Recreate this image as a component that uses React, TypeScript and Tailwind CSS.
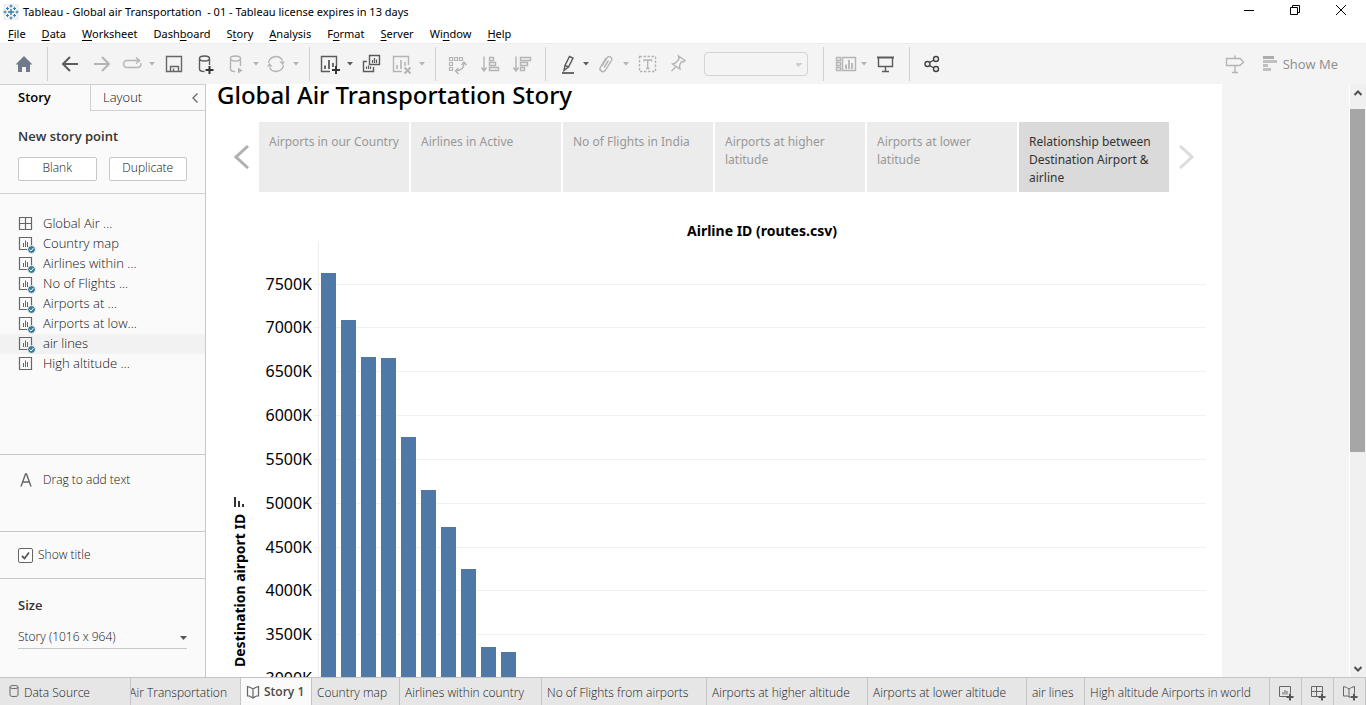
import React from "react";

type IconProps = { children: React.ReactNode; tone?: string };

const dark = "text-[#5b5b5b]";
const dim = "text-[#b4b4b4]";

function Icon({ children, tone = dark }: IconProps) {
  return (
    <svg viewBox="0 0 24 24" className={`block size-6 shrink-0 ${tone}`} fill="none" stroke="currentColor" strokeWidth="1.4" aria-hidden="true">
      {children}
    </svg>
  );
}

function Tool({ label, width = "w-8", tone, children }: { label: string; width?: string; tone?: string; children: React.ReactNode }) {
  return (
    <button type="button" aria-label={label} className={`flex h-8 shrink-0 items-center justify-center ${width}`}>
      <Icon tone={tone}>{children}</Icon>
    </button>
  );
}

function Caret({ label, tone = dim }: { label: string; tone?: string }) {
  return (
    <button type="button" aria-label={label} className={`flex h-8 w-3 shrink-0 items-center justify-center ${tone}`}>
      <svg viewBox="0 0 6 4" className="h-1 w-1.5" fill="currentColor" aria-hidden="true">
        <path d="M0 0h6L3 3.5z" />
      </svg>
    </button>
  );
}

function Separator({ margin = "ml-[7px] mr-1.5" }: { margin?: string }) {
  return <div className={`h-[34px] w-px shrink-0 bg-[#d0d0d0] ${margin}`} />;
}

function Toolbar() {
  return (
    <div className="flex h-[41px] shrink-0 items-center border-t border-[#ededed] bg-[#f4f4f4]">
      <button type="button" aria-label="Start page" className="ml-2 flex h-8 w-8 shrink-0 items-center justify-center">
        <svg viewBox="0 0 24 24" className="size-6" aria-hidden="true">
          <path d="M12 4l8.5 8.5H18V20h-4v-5h-4v5H6v-7.500H3.500z" fill="#6f7b8a" />
        </svg>
      </button>
      <Separator />
      <Tool label="Undo"><path d="M20 12H5M12 5l-7 7 7 7" strokeWidth="2" /></Tool>
      <Tool label="Redo" tone={dim}><path d="M4 12h15M12 5l7 7-7 7" strokeWidth="2" /></Tool>
      <Tool label="Replay" width="w-7" tone={dim}>
        <path d="M20 8.500H7a3.500 3.500 0 0 0 0 7h11a3 3 0 0 0 2.500-4.500" />
        <path d="M16 5.500l3.500 3-3.500 3" />
      </Tool>
      <Caret label="Replay options" />
      <Tool label="Save" tone="text-[#666666]">
        <path d="M4.500 4.500h15v15h-15zM8.500 19v-4.500h8V19M11.500 19v-2.500" />
      </Tool>
      <Tool label="New data source">
        <path d="M5.500 6.500v10.500c0 1.500 2 2.500 5 2.500M5.500 6.500c0-1.500 2-2.500 5-2.500s5 1 5 2.500-2 2.500-5 2.500-5-1-5-2.500zM15.500 6.500V13" />
        <path d="M15.500 14v8M11.500 18h8" stroke="#333333" strokeWidth="2" />
      </Tool>
      <Tool label="Pause auto updates" width="w-7" tone={dim}>
        <path d="M6.500 6.500v10.500c0 1.500 2 2.500 4.500 2.500M6.500 6.500c0-1.500 2-2.500 5-2.500s5 1 5 2.500-2 2.500-5 2.500-5-1-5-2.500zM16.500 6.500V14" />
        <path d="M14 15.500v6l4.500-3z" fill="currentColor" stroke="none" />
      </Tool>
      <Caret label="Auto update options" />
      <Tool label="Run update" width="w-7" tone={dim}>
        <path d="M4.500 11a7.500 7.500 0 0 1 14-2.500M19.500 13a7.500 7.500 0 0 1-14 2.500" />
        <path d="M15.500 9.500H21L18.500 13zM8.500 14.500H3L5.500 11z" fill="currentColor" stroke="none" />
      </Tool>
      <Caret label="Run update options" />
      <Separator />
      <Tool label="New worksheet" width="w-7">
        <path d="M12 19.500H3.500v-15h15V14" />
        <path d="M7 13.500V17M11 8v9M15 11v4" strokeWidth="1.800" />
        <path d="M18 14v8M14 18h8" stroke="#333333" strokeWidth="2" />
      </Tool>
      <Caret label="New worksheet options" tone={dark} />
      <Tool label="Duplicate">
        <path d="M9.500 3.500h10v9h-10zM7 9.500H3.500v10h10V15" />
        <path d="M12.500 8v3M14.500 6v5M16.500 7.500V11M6.500 14.500V17M8.500 13.500V17M10.500 14.500V17" strokeWidth="1.200" />
      </Tool>
      <Tool label="Clear sheet" width="w-7" tone={dim}>
        <path d="M12 19.500H3.500v-15h15V13" />
        <path d="M7 13v4M11 8v9M15 10v4" strokeWidth="1.600" />
        <path d="M14.500 15.500l6 6M20.500 15.500l-6 6" strokeWidth="2" />
      </Tool>
      <Caret label="Clear options" />
      <Separator />
      <Tool label="Swap rows and columns" tone={dim}>
        <path d="M3.500 5.500h3v3h-3zM8.500 5.500h3v3h-3zM13.500 5.500h3v3h-3zM3.500 10.500h3v3h-3zM3.500 15.500h3v3h-3z" strokeWidth="1.200" />
        <path d="M18 11c0 5-2.500 7.500-8 8M15.500 13l2.500-3 2.500 3M12.500 16l-3 3 3 3" />
      </Tool>
      <Tool label="Sort ascending" tone={dim}>
        <path d="M6 4.500v14M3.500 15.500L6 19l2.500-3.500M11.500 5.500h4v3h-4zM11.500 10.500h6v3h-6zM11.500 15.500h9v3h-9z" />
      </Tool>
      <Tool label="Sort descending" tone={dim}>
        <path d="M6 4.500v14M3.500 15.500L6 19l2.500-3.500M10.500 5.500h10v3h-10zM10.500 10.500h7v3h-7zM10.500 15.500h4v3h-4z" />
      </Tool>
      <Separator margin="ml-[7px] mr-2.5" />
      <Tool label="Highlight" width="w-6">
        <path d="M13.500 4.500l3.500 1.500-4.500 9-3.500-1.500zM9 13.500l-1 5 4.500-3.500" />
        <path d="M6 21h12" strokeWidth="1.800" />
      </Tool>
      <Caret label="Highlight options" tone={dark} />
      <Tool label="Group members" width="w-7" tone={dim}>
        <path d="M8 14l5-8c2-3 6-.500 4.500 2.500l-6 9.500c-2.500 3.500-7 .500-5-3L12 6M10 15.500l4.500-7" />
      </Tool>
      <Caret label="Group options" />
      <Tool label="Show mark labels" tone={dim}>
        <path d="M3.500 4.500h16v15h-16z" strokeDasharray="2.500 1.500" />
        <path d="M8 9.500V8h7.500v1.500M11.700 8v8.500M10 16.500h3.500" />
      </Tool>
      <Tool label="Fix axes" width="w-7" tone={dim}>
        <path d="M12.500 4l6.500 4.500-1.500 1.500-2-.500-2 4 .500 3.500-7.500-5 3-1 3.500-4zM10 14.500L5.500 19" />
      </Tool>
      <select aria-label="Fit" disabled className="ml-3 h-6 w-[104px] shrink-0 appearance-none rounded-sm border border-[#d4d4d4] bg-[#f4f4f4] bg-[linear-gradient(to_bottom_right,#cfcfcf_50%,transparent_50%),linear-gradient(to_bottom_left,#cfcfcf_50%,transparent_50%)] bg-[length:4px_4px] bg-[position:94px_10px,90px_10px] bg-no-repeat" />
      <Separator margin="ml-[15px] mr-2.5" />
      <Tool label="Show or hide cards" width="w-6" tone={dim}>
        <path d="M2.500 5.500h4v3h-4zM2.500 10.500h4v3h-4zM2.500 15.500h4v3h-4zM8.500 5.500h13v13h-13z" />
        <path d="M12 12.500V17M15 8v9M18 11v6" strokeWidth="1.800" />
      </Tool>
      <Caret label="Card options" />
      <Tool label="Presentation mode">
        <path d="M3 5.500h17" strokeWidth="2" />
        <path d="M4.500 6v8.500h14V6M11.500 14.500v5M8 19.500h7" />
      </Tool>
      <Separator />
      <Tool label="Share" tone="text-[#444444]">
        <circle cx="7.500" cy="12" r="2.500" />
        <circle cx="16" cy="7" r="2.500" />
        <circle cx="16" cy="17" r="2.500" />
        <path d="M9.500 10.500L14 8M9.500 13.500L14 16" />
      </Tool>
      <div className="ml-auto flex items-center pr-7">
        <Tool label="Data guide" tone={dim}>
          <path d="M3.500 6.500h13.500l3.500 3.500-3.500 3.500H3.500zM12 3.500v3M12 13.500v7M9 20.500h6" />
        </Tool>
        <button type="button" className="ml-3 flex items-center gap-1.5 font-['Open_Sans',sans-serif] text-[13px] leading-4 text-[#8c8c8c]">
          <svg viewBox="0 0 14 16" className="h-4 w-3.5" fill="#c0c0c0" aria-hidden="true">
            <path d="M0 0h11v3H0z" fill="#acacac" />
            <path d="M0 4h14v3H0zM0 8h5v3H0zM0 12h8v3H0z" />
          </svg>
          Show Me
        </button>
      </div>
    </div>
  );
}

const menus: [string, string, string][] = [
  ["", "F", "ile"], ["", "D", "ata"], ["", "W", "orksheet"], ["Dash", "b", "oard"], ["S", "t", "ory"],
  ["", "A", "nalysis"], ["F", "o", "rmat"], ["", "S", "erver"], ["Wi", "n", "dow"], ["", "H", "elp"],
];

function TitleBar() {
  return (
    <header className="shrink-0 bg-white font-['Noto_Sans',sans-serif] text-[11px] text-black">
      <div className="flex h-6 items-center pl-[3px]">
        <svg viewBox="0 0 16 16" className="size-4 shrink-0 bg-[#f0f0f0]" stroke="#2f7fa8" fill="none" aria-hidden="true">
          <path d="M8 5v6M5 8h6" strokeWidth="1.400" />
          <path d="M8 .5v3M6.500 2h3M8 12.500v3M6.500 14h3M.5 8h3M2 6.500v3M12.500 8h3M14 6.500v3M4.500 3v3M3 4.500h3M11.500 3v3M10 4.500h3M4.500 10v3M3 11.500h3M11.500 10v3M10 11.500h3" />
        </svg>
        <h1 className="ml-1 whitespace-pre">Tableau - Global air Transportation  - 01 - Tableau license expires in 13 days</h1>
        <div className="ml-auto flex items-start pr-0.5 pb-1">
          <button type="button" aria-label="Minimize" className="flex h-5 w-[46px] items-center justify-center">
            <svg viewBox="0 0 10 10" className="size-2.5" stroke="black"><path d="M0 5.500h10" /></svg>
          </button>
          <button type="button" aria-label="Restore" className="flex h-5 w-[46px] items-center justify-center">
            <svg viewBox="0 0 10 10" className="size-2.5" stroke="black" fill="none"><path d="M.5 2.500h7v7h-7zM2.500 2.500v-2h7v7h-2" /></svg>
          </button>
          <button type="button" aria-label="Close" className="flex h-5 w-[46px] items-center justify-center">
            <svg viewBox="0 0 10 10" className="size-2.5" stroke="black"><path d="M0 0l10 10M10 0L0 10" /></svg>
          </button>
        </div>
      </div>
      <nav className="flex h-[19px] items-center gap-4 pt-0.5 pl-2">
        {menus.map(([a, k, b]) => (
          <button type="button" key={a + k + b}>{a}<span className="underline underline-offset-2">{k}</span>{b}</button>
        ))}
      </nav>
    </header>
  );
}

function SheetGlyph({ used }: { used: boolean }) {
  return (
    <svg viewBox="0 0 18 16" className="h-4 w-[18px] shrink-0 overflow-visible" fill="none" stroke="#666666" aria-hidden="true">
      <path d="M1.500 1.500h12v12h-12z" strokeWidth="1.200" />
      <path d="M5.500 7v4M7.500 4.500V11M9.500 6v5" />
      {used && (
        <>
          <circle cx="13.500" cy="13.500" r="4" fill="#3b7d99" stroke="#fafafa" />
          <path d="M11.500 13.500l1.500 1.500 2.500-3" stroke="white" />
        </>
      )}
    </svg>
  );
}

function GridGlyph() {
  return (
    <svg viewBox="0 0 18 16" className="h-4 w-[18px] shrink-0" fill="none" stroke="#666666" strokeWidth="1.200" aria-hidden="true">
      <path d="M1.500 1.500h12v12h-12zM7.500 1.500v12M1.500 7.500h12" />
    </svg>
  );
}

const sheets = [
  { name: "Global Air ...", kind: "dashboard" },
  { name: "Country map", kind: "used" },
  { name: "Airlines within ...", kind: "used" },
  { name: "No of Flights ...", kind: "used" },
  { name: "Airports at ...", kind: "used" },
  { name: "Airports at low...", kind: "used" },
  { name: "air lines", kind: "used", active: true },
  { name: "High altitude ...", kind: "sheet" },
];

function Sidebar() {
  return (
    <aside className="flex w-[206px] shrink-0 flex-col border-r border-[#cacaca] bg-[#fafafa] font-['Open_Sans',sans-serif] text-[13px] font-light text-[#111111]">
      <div className="flex h-[27px] shrink-0 border-t border-[#d0d0d0]">
        <button type="button" className="w-[90px] pl-[18px] text-left font-semibold text-black">Story</button>
        <div className="flex flex-1 items-center border-b border-l border-[#d0d0d0] pl-3 pr-[7px]">
          <button type="button">Layout</button>
          <button type="button" aria-label="Collapse pane" className="ml-auto">
            <svg viewBox="0 0 6 10" className="h-2.5 w-1.5" fill="none" stroke="#666666" strokeWidth="1.300"><path d="M5.500 .5L1 5l4.500 4.500" /></svg>
          </button>
        </div>
      </div>
      <section className="h-[83px] shrink-0 border-b border-[#d0d0d0] px-[18px] pt-[15px]">
        <h2 className="leading-5 font-semibold text-[#333333]">New story point</h2>
        <div className="mt-[11px] flex gap-3 text-xs">
          <button type="button" className="h-6 flex-1 rounded-xs border border-[#c8c8c8] bg-white pb-0.5">Blank</button>
          <button type="button" className="h-6 flex-1 rounded-xs border border-[#c8c8c8] bg-white pb-0.5">Duplicate</button>
        </div>
      </section>
      <ul className="flex-1 pt-5">
        {sheets.map((s) => (
          <li key={s.name} className={`flex h-5 items-center gap-[7px] pl-[18px] ${s.active ? "bg-[#f2f2f2]" : ""}`}>
            {s.kind === "dashboard" ? <GridGlyph /> : <SheetGlyph used={s.kind === "used"} />}
            {s.name}
          </li>
        ))}
      </ul>
      <div className="flex h-[77px] shrink-0 items-start border-t border-[#c8c8c8] pt-4 text-xs leading-[18px]">
        <svg viewBox="0 0 12 14" className="ml-5 mt-0.5 h-3.5 w-3" fill="none" stroke="#666666" strokeWidth="1.400" aria-hidden="true"><path d="M1 13.500L5.500 1h1L11 13.500M2.500 9h7" /></svg>
        <span className="ml-[11px]">Drag to add text</span>
      </div>
      <div className="flex h-[47px] shrink-0 items-center border-t border-[#c8c8c8] pl-[18px] text-xs">
        <label className="flex items-center gap-[5px]">
          <span className="grid size-[15px]">
            <input type="checkbox" defaultChecked className="peer col-start-1 row-start-1 size-[15px] appearance-none rounded-xs border border-[#666666] bg-white" />
            <svg viewBox="0 0 15 15" className="pointer-events-none col-start-1 row-start-1 hidden size-[15px] peer-checked:block" fill="none" stroke="#555555" strokeWidth="1.800"><path d="M4 8l2.500 2.500 4.500-6" /></svg>
          </span>
          Show title
        </label>
      </div>
      <section className="h-[99px] shrink-0 border-t border-[#c8c8c8] px-[18px] pt-4">
        <h2 className="leading-5 font-semibold text-[#333333]">Size</h2>
        <div className="mt-3 grid items-center border-b border-[#c8c8c8]">
          <select aria-label="Story size" className="col-start-1 row-start-1 h-[21px] w-full appearance-none bg-transparent pb-0.5 text-xs">
            <option>Story (1016 x 964)</option>
          </select>
          <svg viewBox="0 0 7 4" className="pointer-events-none col-start-1 row-start-1 h-1 w-[7px] justify-self-end" fill="#555555"><path d="M0 0h7L3.500 4z" /></svg>
        </div>
      </section>
    </aside>
  );
}

const points = [
  "Airports in our Country", "Airlines in Active", "No of Flights in India",
  "Airports at higher latitude", "Airports at lower latitude", "Relationship between Destination Airport & airline",
];

const ticks = ["7500K", "7000K", "6500K", "6000K", "5500K", "5000K", "4500K", "4000K", "3500K", "3000K"];
const tickY = [43, 86, 130, 174, 218, 262, 306, 349, 393, 437];
const barTops = [32, 79, 116, 117, 196, 249, 286, 328, 406, 411];

function Chart() {
  return (
    <svg className="block h-[720px] w-full" role="img" aria-label="Destination airport ID by Airline ID">
      {tickY.map((y, i) => (
        <g key={y}>
          <line x1="108" x2="98.4%" y1={y + 0.5} y2={y + 0.5} stroke="#f0f0f0" />
          <text x="106" y={y + 6} textAnchor="end" className="font-['Noto_Sans',sans-serif] text-base">{ticks[i]}</text>
        </g>
      ))}
      <line x1="112.500" x2="112.500" y1="0" y2="720" stroke="#ececec" />
      {barTops.map((y, i) => (
        <rect key={i} x={115 + i * 20} y={y} width="15" height={720 - y} fill="#4e79a7" />
      ))}
      <text transform="translate(39 426) rotate(-90)" className="font-['Noto_Sans',sans-serif] text-sm font-bold">Destination airport ID</text>
      <path d="M29 256v10M33 260v6M37 263v3" stroke="#333333" strokeWidth="2" />
    </svg>
  );
}

function Story() {
  return (
    <main className="min-w-0 flex-1 overflow-hidden bg-white font-['Noto_Sans',sans-serif] text-black">
      <h2 className="h-[38px] pl-[11px] text-2xl leading-[22px] font-medium">Global Air Transportation Story</h2>
      <div className="flex items-center pr-7 pl-7">
        <button type="button" aria-label="Previous story point" className="w-[25px] shrink-0">
          <svg viewBox="0 0 16 24" className="h-6 w-4" fill="none" stroke="#b0b0b0" strokeWidth="3"><path d="M14 1L2 12l12 11" /></svg>
        </button>
        <div className="grid h-[70px] flex-1 grid-cols-6 gap-0.5">
          {points.map((p, i) => (
            <button type="button" key={p} className={`flex items-start pt-[11px] pr-2 pl-2.5 text-left text-xs leading-[18px] ${i === 5 ? "bg-[#dadada] text-[#333333]" : "bg-[#ececec] text-[#989898]"}`}>
              {p}
            </button>
          ))}
        </div>
        <button type="button" aria-label="Next story point" className="flex w-[25px] shrink-0 justify-end">
          <svg viewBox="0 0 16 24" className="h-6 w-4" fill="none" stroke="#dcdcdc" strokeWidth="3"><path d="M2 1l12 11L2 23" /></svg>
        </button>
      </div>
      <h3 className="h-[49px] pt-[29px] pl-24 text-center text-sm leading-5 font-bold">Airline ID (routes.csv)</h3>
      <Chart />
    </main>
  );
}

function BookGlyph() {
  return (
    <svg viewBox="0 0 14 14" className="h-3.5 w-3.5 shrink-0" fill="none" stroke="#666666" strokeWidth="1.200" aria-hidden="true">
      <path d="M4.500 2.500l-3-1v9.500h2l3.500 2 3.500-2h2v-9.500l-3 1L7 4zM7 4v9" />
    </svg>
  );
}

const sheetTabs: [string, string][] = [
  ["Country map", "w-[88px]"], ["Airlines within country", "w-[142px]"], ["No of Flights from airports", "w-[165px]"],
  ["Airports at higher altitude", "w-[161px]"], ["Airports at lower altitude", "w-[159px]"], ["air lines", "w-[58px]"],
  ["High altitude Airports in world", "w-[185px]"],
];

function SheetTabs() {
  const add = "flex w-8 shrink-0 items-center justify-center border-r border-[#c4c4c4] pt-0.5";
  return (
    <footer className="flex h-7 shrink-0 border-t border-[#c4c4c4] bg-[#e6e6e6] font-['Open_Sans',sans-serif] text-xs font-light whitespace-nowrap text-[#222222]">
      <button type="button" className="flex w-[131px] shrink-0 items-center gap-[5px] border-r border-[#c4c4c4] pt-0.5 pl-[9px]">
        <svg viewBox="0 0 10 12" className="mb-1 h-3 w-2.5" fill="none" stroke="#666666"><path d="M1 2v8c0 1 1 1.500 4 1.500s4-.500 4-1.500V2c0-1-1-1.500-4-1.500S1 1 1 2zM1 2c0 1 1 1.500 4 1.500S9 3 9 2" /></svg>
        Data Source
      </button>
      <button type="button" className="flex w-[110px] shrink-0 items-center justify-end overflow-hidden border-r border-[#c4c4c4] pt-0.5 pr-[13px]">Air Transportation</button>
      <button type="button" className="flex w-[71px] shrink-0 items-center gap-1 border-r border-[#c4c4c4] bg-[#fafafa] pl-[5px] font-semibold text-[#4a4a4a]"><BookGlyph />Story 1</button>
      {sheetTabs.map(([name, width]) => (
        <button type="button" key={name} className={`shrink-0 border-r border-[#c4c4c4] pt-0.5 pl-[5px] text-left ${width}`}>{name}</button>
      ))}
      <button type="button" aria-label="New worksheet" className={add}>
        <svg viewBox="0 0 16 16" className="size-4" fill="none" stroke="#666666"><path d="M9 11.500H1.500v-10h11V8M5 7v2.500M7 5v4.500M9 6v3.500" /><path d="M12 8.500v7M8.500 12h7" stroke="#555555" strokeWidth="2" /></svg>
      </button>
      <button type="button" aria-label="New dashboard" className={add}>
        <svg viewBox="0 0 16 16" className="size-4" fill="none" stroke="#666666"><path d="M9 11.500H1.500v-10h11V8M6.500 1.500v10M1.500 6.500h11" /><path d="M12 8.500v7M8.500 12h7" stroke="#555555" strokeWidth="2" /></svg>
      </button>
      <button type="button" aria-label="New story" className={add}>
        <svg viewBox="0 0 16 16" className="size-4" fill="none" stroke="#666666"><path d="M8 12.500l-2.500-1.500h-4V1.500l3 1L7 4l2.500-1.500 3-1V8M7 4v8" /><path d="M12 8.500v7M8.500 12h7" stroke="#555555" strokeWidth="2" /></svg>
      </button>
    </footer>
  );
}

export default function App() {
  return (
    <div className="flex h-screen flex-col overflow-hidden bg-white">
      <TitleBar />
      <Toolbar />
      <div className="flex min-h-0 flex-1 bg-[#f4f4f4]">
        <Sidebar />
        <Story />
        <div className="w-32 shrink-0 border-r border-white" />
        <div className="flex w-4 shrink-0 flex-col bg-[#f0f0f0]">
          <button type="button" aria-label="Scroll up" className="flex h-[25px] w-[15px] items-start justify-center pt-1.5">
            <svg viewBox="0 0 8 6" className="h-1.5 w-2" fill="none" stroke="#505050" strokeWidth="2"><path d="M.5 5L4 1.500 7.500 5" /></svg>
          </button>
          <div className="h-[343px] w-[15px] bg-[#a6a6a6]" />
          <button type="button" aria-label="Scroll down" className="mt-auto flex h-[17px] w-[15px] items-center justify-center">
            <svg viewBox="0 0 8 6" className="h-1.5 w-2" fill="none" stroke="#505050" strokeWidth="2"><path d="M.5 1L4 4.500 7.500 1" /></svg>
          </button>
        </div>
      </div>
      <SheetTabs />
    </div>
  );
}
